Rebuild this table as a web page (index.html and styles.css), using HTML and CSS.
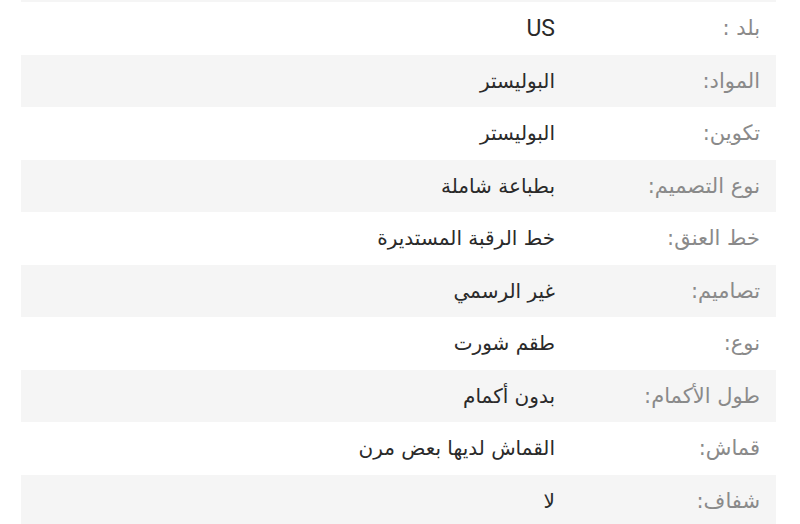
FILE: index.html
```html
<!DOCTYPE html>
<html lang="ar" dir="rtl">
<head>
<meta charset="utf-8">
<link rel="stylesheet" href="styles.css">
</head>
<body>
<div class="specs">
  <div class="row"><span class="label"></span><span class="value"></span></div>
  <div class="row"><span class="label">بلد :</span><span class="value latin">US</span></div>
  <div class="row"><span class="label">المواد:</span><span class="value">البوليستر</span></div>
  <div class="row"><span class="label">تكوين:</span><span class="value">البوليستر</span></div>
  <div class="row"><span class="label">نوع التصميم:</span><span class="value">بطباعة شاملة</span></div>
  <div class="row"><span class="label">خط العنق:</span><span class="value">خط الرقبة المستديرة</span></div>
  <div class="row"><span class="label">تصاميم:</span><span class="value">غير الرسمي</span></div>
  <div class="row"><span class="label">نوع:</span><span class="value">طقم شورت</span></div>
  <div class="row"><span class="label">طول الأكمام:</span><span class="value">بدون أكمام</span></div>
  <div class="row"><span class="label">قماش:</span><span class="value">القماش لديها بعض مرن</span></div>
  <div class="row"><span class="label">شفاف:</span><span class="value">لا</span></div>
</div>
</body>
</html>
```
FILE: styles.css
```css
html, body {
  margin: 0;
  padding: 0;
  background: #ffffff;
  overflow: hidden;
}
body {
  width: 800px;
  height: 524px;
  font-family: "DejaVu Sans", sans-serif;
}
.specs {
  margin-top: -50.5px;
  margin-right: 24px;
  width: 755px;
  display: flex;
  flex-direction: column;
}
.row {
  height: 52.5px;
  display: flex;
  align-items: center;
  padding-right: 16px;
  box-sizing: border-box;
}
.row:nth-child(odd) {
  background: #f5f5f5;
}
.label {
  width: 205px;
  flex: none;
  color: #8a8a8a;
  font-size: 21px;
}
.value {
  color: #2a2a2a;
  font-size: 20px;
}
.latin {
  font-family: Roboto, sans-serif;
  font-size: 23px;
}
```
